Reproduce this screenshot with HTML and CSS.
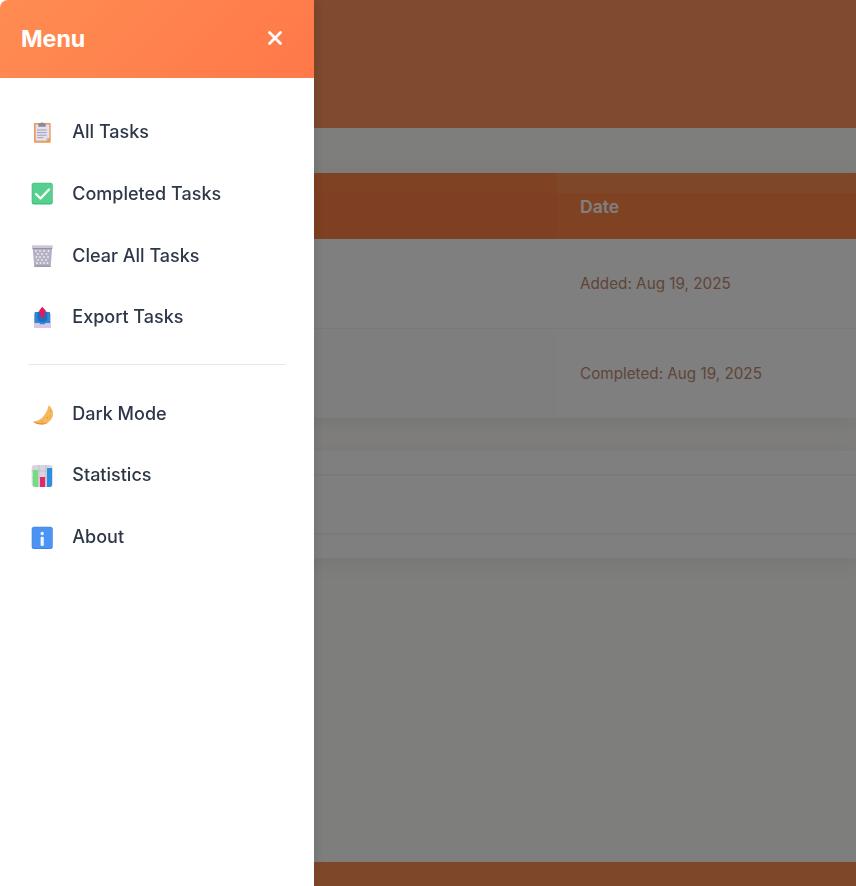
FILE: index.html
```html
<!DOCTYPE html>
<html lang="en">
<head>
    <meta charset="UTF-8">
    <meta name="viewport" content="width=device-width, initial-scale=1.0">
    <title>Tasks</title>
    <link rel="stylesheet" href="styles.css">
</head>
<body>
    <div class="page">
        <header class="page-header"></header>
        <main class="content">
            <div class="task-table">
                <div class="table-head">
                    <div class="head-cell"></div>
                    <div class="head-cell head-date">Date</div>
                </div>
                <div class="table-row">
                    <div class="cell cell-main"></div>
                    <div class="cell">Added: Aug 19, 2025</div>
                </div>
                <div class="table-row row-done">
                    <div class="cell cell-main"></div>
                    <div class="cell">Completed: Aug 19, 2025</div>
                </div>
            </div>
            <div class="info-block">
                <div class="info-line info-top"></div>
                <div class="info-line info-mid"></div>
                <div class="info-line info-end"></div>
            </div>
        </main>
        <footer class="page-footer"></footer>
    </div>

    <div class="overlay"></div>

    <aside class="sidebar">
        <div class="sidebar-header">
            <h2>Menu</h2>
            <button class="close-btn" aria-label="Close">
                <svg width="16" height="16" viewBox="0 0 16 16"><path d="M2.500 2.500l11 11M13.500 2.500l-11 11" stroke="#fff" stroke-width="2.800" stroke-linecap="round"/></svg>
            </button>
        </div>
        <nav class="sidebar-nav">
            <a class="nav-item">
                <svg class="nav-icon" viewBox="0 0 24 24">
                    <rect x="4" y="3" width="16.700" height="19.700" rx=".8" fill="#e89a5e"/>
                    <path d="M5.700 4.500h13.600v13.200l-3 3H5.700z" fill="#e5e0f0"/>
                    <path d="M19.300 17.700l-3 3v-3z" fill="#c9bcd6"/>
                    <path d="M8.300 4.300c0-.8.900-1 2-1.100.4-.9 2.900-.9 3.300 0 1.100.1 2.100.3 2.100 1.100v2.400H8.300z" fill="#8f8791"/>
                    <path d="M7 10h9.700M7 12.600h9.700M7 15.200h9.700M7 17.700h6.500" stroke="#a49eb0" stroke-width="1"/>
                </svg>
                <span>All Tasks</span>
            </a>
            <a class="nav-item">
                <svg class="nav-icon" viewBox="0 0 24 24">
                    <rect x="1.700" y="1.800" width="21" height="21.700" rx="2.500" fill="#3fb978"/>
                    <rect x="2.300" y="2.300" width="19.800" height="20" rx="2" fill="#55d08e"/>
                    <path d="M6 13l4.500 4.500L19 8.500" fill="none" stroke="#fafdfb" stroke-width="2.400" stroke-linecap="round" stroke-linejoin="round"/>
                </svg>
                <span>Completed Tasks</span>
            </a>
            <a class="nav-item">
                <svg class="nav-icon" viewBox="0 0 24 24">
                    <path d="M2.500 4h19.700l-1.500 19.700H4.300z" fill="#b5b0c4"/>
                    <path d="M2 2.300h20.700V5H2z" fill="#cbc8d3"/>
                    <path d="M2.500 5h19.700v1H2.500zM4.300 22.500h16.400v1.200H4.300z" fill="#948fa6"/>
                    <g fill="#eeecf3">
                        <circle cx="6" cy="8" r=".9"/><circle cx="10" cy="8" r=".9"/><circle cx="14" cy="8" r=".9"/><circle cx="18.500" cy="8" r=".9"/>
                        <circle cx="8" cy="11" r=".9"/><circle cx="12" cy="11" r=".9"/><circle cx="16.500" cy="11" r=".9"/>
                        <circle cx="6.500" cy="14" r=".9"/><circle cx="10" cy="14" r=".9"/><circle cx="14" cy="14" r=".9"/><circle cx="18" cy="14" r=".9"/>
                        <circle cx="8" cy="17" r=".9"/><circle cx="12" cy="17" r=".9"/><circle cx="16" cy="17" r=".9"/>
                        <circle cx="7" cy="20" r=".9"/><circle cx="10.500" cy="20" r=".9"/><circle cx="14" cy="20" r=".9"/><circle cx="17.500" cy="20" r=".9"/>
                    </g>
                </svg>
                <span>Clear All Tasks</span>
            </a>
            <a class="nav-item">
                <svg class="nav-icon" viewBox="0 0 24 24">
                    <path d="M4 9l3-2.300h10.700l3 2.300v13.700H4z" fill="#c4a6d6"/>
                    <path d="M4.700 7h15.300v12H4.700z" fill="#2b8ad8"/>
                    <path d="M7.500 7h9.700v8l-2.500 2h-4.700l-2.500-2z" fill="#1f6fc0"/>
                    <path d="M4 18h5.500l1 1.800h4l1-1.800h5.200v4.700H4z" fill="#d8c7e4"/>
                    <path d="M12.300 1.700l4.400 5h-2v5.500h-4.700V6.700H8.300z" fill="#dc1c5c"/>
                </svg>
                <span>Export Tasks</span>
            </a>
            <div class="nav-divider"></div>
            <a class="nav-item">
                <svg class="nav-icon" viewBox="0 0 24 24">
                    <path d="M19 4.500c3 2.500 4.200 6 4 9-.5 5.500-5.500 10-11.500 10-3.500 0-6.500-1-8.500-3 4.500-.2 8.500-2.500 11-6 2.200-3 4-6.500 4.500-10z" fill="#f6b85e"/>
                    <path d="M3 20.500c2 2 5 3 8.500 3 2.500 0 4.800-.8 6.700-2.100-4.700 1.600-10.200 1-15.200-.9z" fill="#e8853c"/>
                    <circle cx="20.500" cy="10" r=".7" fill="#d98a3a"/><circle cx="17.500" cy="16.500" r=".8" fill="#d98a3a"/><circle cx="20" cy="15" r=".6" fill="#d98a3a"/><circle cx="12" cy="20.500" r=".7" fill="#d98a3a"/>
                </svg>
                <span>Dark Mode</span>
            </a>
            <a class="nav-item">
                <svg class="nav-icon" viewBox="0 0 24 24">
                    <rect x="1.700" y="2" width="21" height="22" rx="3" fill="#d9d5df"/>
                    <path d="M1.700 8h21M1.700 14.500h21M9 2v22M15.800 2v22" stroke="#bfbac8" stroke-width=".8"/>
                    <path d="M3 7h5v17H5c-1.200 0-2-.9-2-2z" fill="#74dd80"/>
                    <rect x="10" y="14" width="5" height="10" fill="#e5276a"/>
                    <path d="M17 5h5v17c0 1.100-.8 2-2 2h-3z" fill="#2b8fe0"/>
                </svg>
                <span>Statistics</span>
            </a>
            <a class="nav-item">
                <svg class="nav-icon" viewBox="0 0 24 24">
                    <rect x="1.700" y="1.700" width="21" height="22.300" rx="2.500" fill="#3f7fe8"/>
                    <rect x="2.300" y="2.200" width="19.800" height="20.800" rx="2" fill="#4c94f3"/>
                    <circle cx="12.200" cy="8.500" r="1.700" fill="#eef4fd"/>
                    <rect x="10.600" y="11.700" width="3.200" height="9.300" rx="1" fill="#eef4fd"/>
                </svg>
                <span>About</span>
            </a>
        </nav>
    </aside>
</body>
</html>
```

FILE: styles.css
```css
* {
    box-sizing: border-box;
}
body {
    margin: 0;
    font-family: Inter, "Liberation Sans", sans-serif;
    background-color: #fdfcfa;
    color: #2d3748;
}
.page {
    display: flex;
    flex-direction: column;
    height: 100vh;
    overflow: hidden;
}
.page-header {
    height: 128px;
    flex-shrink: 0;
    background: #ff945c;
}
.content {
    flex: 1;
    padding-top: 45px;
}
.task-table {
    background: #fff;
    box-shadow: 0 4px 20px rgba(0, 0, 0, 0.08);
}
.table-head {
    display: grid;
    grid-template-columns: 557px 1fr;
    height: 66px;
}
.head-cell {
    background: linear-gradient(#ff8445 0, #ff8445 20px, #ff7f44 20px);
}
.head-date {
    display: flex;
    align-items: center;
    padding-left: 23px;
    font-size: 17.6px;
    font-weight: 600;
    background: linear-gradient(#ff8f55 0, #ff8f55 20px, #ff8749 20px);
    color: #fff;
}
.table-row {
    display: grid;
    grid-template-columns: 557px 1fr;
    height: 90px;
    border-bottom: 1px solid #f2f2f2;
}
.row-done {
    height: 89px;
    border-bottom: none;
}
.row-done .cell-main {
    background: #fafdfb;
}
.cell {
    display: flex;
    align-items: center;
    padding-left: 23px;
    font-size: 15.25px;
    color: #c08a70;
}
.cell-main {
    padding: 0;
}
.info-block {
    margin-top: 33px;
    background: #fff;
    box-shadow: 0 4px 20px rgba(0, 0, 0, 0.08);
}
.info-line {
    border-bottom: 2px solid #f4f4f4;
}
.info-top {
    height: 25px;
}
.info-mid {
    height: 59px;
}
.info-end {
    height: 23px;
    border-bottom: none;
}
.page-footer {
    height: 24px;
    flex-shrink: 0;
    background: #ff8f55;
}
.overlay {
    position: fixed;
    inset: 0;
    background: rgba(0, 0, 0, 0.5);
}
.sidebar {
    position: fixed;
    top: 0;
    left: 0;
    bottom: 0;
    width: 314px;
    background: #fff;
    box-shadow: 2px 0 10px rgba(0, 0, 0, 0.1);
}
.sidebar-header {
    display: flex;
    justify-content: space-between;
    align-items: center;
    height: 78px;
    padding: 0 31px 2px 21px;
    background: linear-gradient(135deg, #ff8c52, #ff7849);
    border-top-left-radius: 8px;
    color: white;
}
.sidebar-header h2 {
    margin: 2px 0 0;
    font-size: 23.2px;
    font-weight: 700;
}
.close-btn {
    display: flex;
    padding: 0;
    border: none;
    background: none;
    cursor: pointer;
}
.sidebar-nav {
    padding-top: 23.1px;
}
.nav-item {
    display: flex;
    align-items: center;
    gap: 18.3px;
    height: 61.6px;
    padding-left: 30px;
    font-size: 18px;
    font-weight: 500;
    color: #2d3748;
    cursor: pointer;
}
.nav-icon {
    width: 24px;
    height: 24px;
    flex-shrink: 0;
}
.nav-divider {
    height: 1px;
    margin: 16.7px 28px 17.4px;
    background: #e2e8f0;
}
```
